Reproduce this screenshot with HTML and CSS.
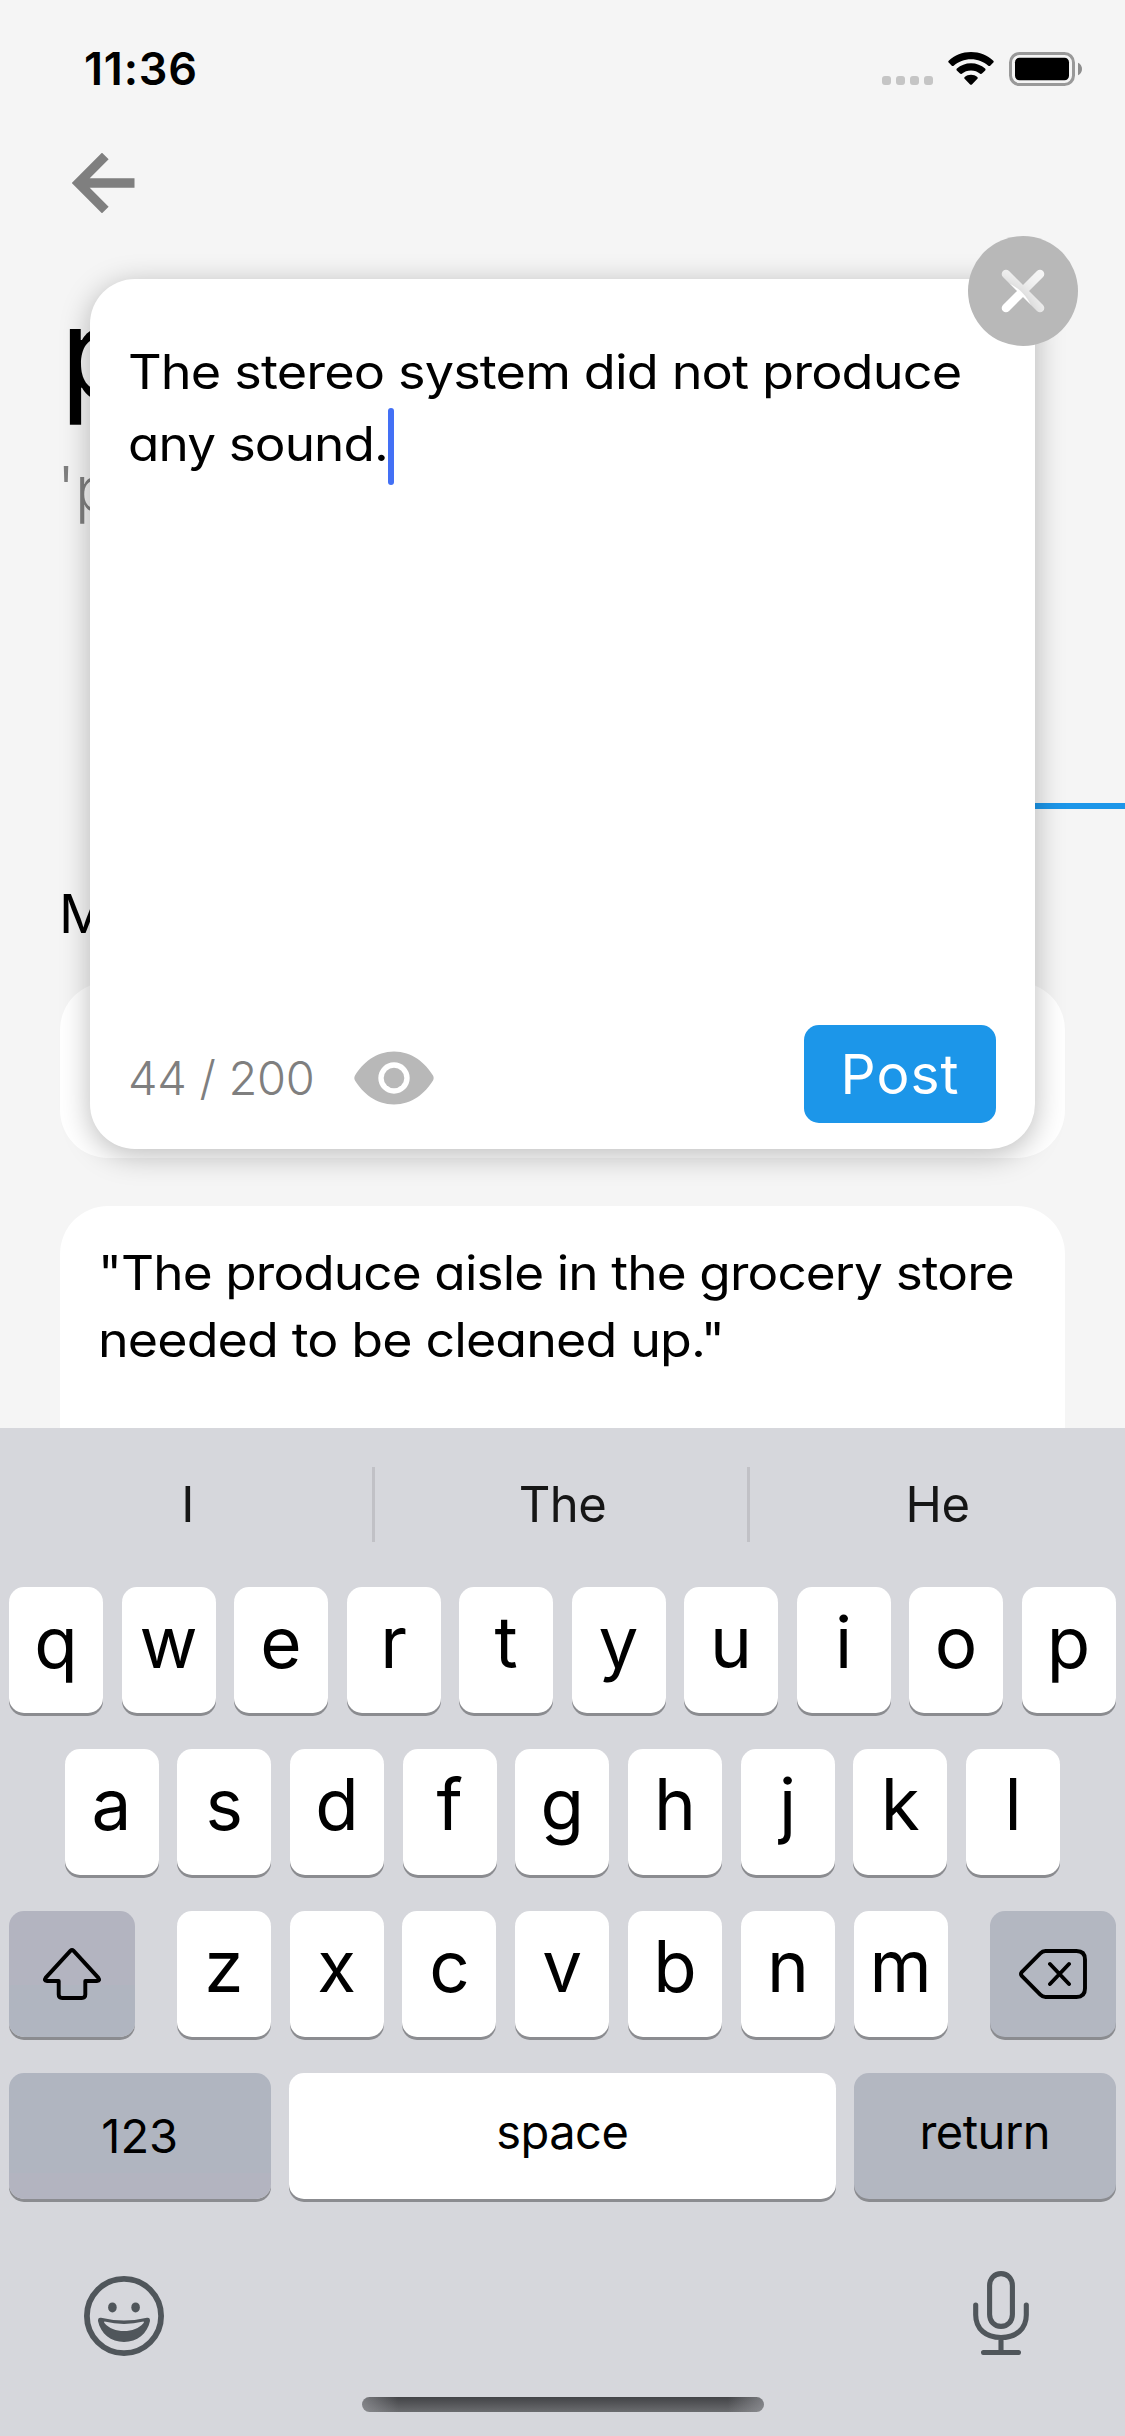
FILE: index.html
```html
<!DOCTYPE html>
<html lang="en">
<head>
<meta charset="utf-8">
<title>Add a sentence</title>
<link rel="stylesheet" href="styles.css">
</head>
<body>
<main class="screen">
  <header class="status">
    <span class="time">11:36</span>
    <div class="status-icons">
      <span class="dots"><i></i><i></i><i></i><i></i></span>
      <svg class="wifi" width="46" height="34" viewBox="0 0 46 34">
        <path d="M23 0C14.4 0 6.600 3.300.7 8.700c-.6.500-.6 1.400 0 1.900l3.100 3.100c.5.500 1.300.500 1.900 0C10.300 9.600 16.400 7.200 23 7.200s12.700 2.400 17.300 6.500c.6.500 1.400.500 1.900 0l3.100-3.100c.6-.5.6-1.400 0-1.900C39.400 3.300 31.600 0 23 0z"/>
        <path d="M23 11.200c-5.400 0-10.300 2-14.100 5.300-.6.500-.6 1.400-.1 1.900l3.200 3.200c.5.500 1.300.5 1.800.1 2.500-2.100 5.700-3.300 9.200-3.300s6.700 1.200 9.200 3.300c.5.400 1.300.4 1.800-.1l3.200-3.200c.5-.5.5-1.400-.1-1.900-3.800-3.300-8.700-5.300-14.100-5.300z"/>
        <path d="M23 22.800c-2.400 0-4.600.8-6.300 2.200-.6.500-.6 1.300-.1 1.800l5.500 5.600c.5.500 1.300.5 1.800 0l5.500-5.600c.5-.5.5-1.300-.1-1.800-1.700-1.400-3.900-2.200-6.300-2.200z"/>
      </svg>
      <svg class="battery" width="73" height="34" viewBox="0 0 73 34">
        <rect x="1.500" y="1.500" width="63" height="31" rx="9" fill="none" stroke="#999" stroke-width="3"/>
        <rect x="6" y="5.700" width="54" height="22.600" rx="4.500"/>
        <path d="M69 10.700v12.600c2.500-1 4-3.500 4-6.300s-1.500-5.300-4-6.300z" fill="#8e8e8e"/>
      </svg>
    </div>
  </header>
  <nav class="nav">
    <svg width="63" height="60" viewBox="0 0 63 60"><path d="M62.500 30H6M33.300 3L6.400 30l26.900 27" fill="none" stroke="#7f7f7f" stroke-width="9.400"/></svg>
  </nav>
  <h1 class="word">p</h1>
  <p class="phonetic">'p</p>
  <div class="tab-line"></div>
  <h2 class="section">M</h2>
  <div class="entries">
    <article class="entry entry-short"></article>
    <article class="entry"><p><span class="e1">"The produce aisle in the grocery store</span><br><span class="e2">needed to be cleaned up."</span></p></article>
  </div>

  <section class="composer">
    <p class="draft"><span class="d1">The stereo system did not produce</span><br><span class="d2">any sound.</span><span class="caret"></span></p>
    <footer class="composer-bar">
      <span class="count">44 / 200</span>
      <svg class="eye" width="80" height="54" viewBox="0 0 80 54">
        <path fill-rule="evenodd" fill="#b8b8b8" d="M40 .500C58 .500 71.500 12 79 24.500c.9 1.600.9 3.400 0 5C71.500 42 58 53.500 40 53.500S8.500 42 1 29.500c-.9-1.600-.9-3.400 0-5C8.500 12 22 .5 40 .5zM40 11.300a15.700 15.700 0 1 0 0 31.400a15.700 15.700 0 1 0 0-31.400z"/>
        <circle cx="40" cy="27" r="10.300" fill="#b8b8b8"/>
      </svg>
      <button class="post">Post</button>
    </footer>
    <svg class="close" width="110" height="110" viewBox="0 0 110 110">
      <mask id="cross"><rect width="110" height="110" fill="#fff"/><path d="M38 38l34 34M72 38L38 72" stroke="#000" stroke-width="8.600" stroke-linecap="round"/></mask>
      <circle cx="55" cy="55" r="55" fill="#b8b8b8" mask="url(#cross)"/>
    </svg>
  </section>
</main>

<section class="keyboard">
  <div class="suggestions"><span>I</span><span>The</span><span>He</span></div>
  <div class="row"><kbd>q</kbd><kbd>w</kbd><kbd>e</kbd><kbd>r</kbd><kbd>t</kbd><kbd>y</kbd><kbd>u</kbd><kbd>i</kbd><kbd>o</kbd><kbd>p</kbd></div>
  <div class="row row-mid"><kbd>a</kbd><kbd>s</kbd><kbd>d</kbd><kbd>f</kbd><kbd>g</kbd><kbd>h</kbd><kbd>j</kbd><kbd>k</kbd><kbd>l</kbd></div>
  <div class="row">
    <kbd class="side shift"><svg width="60" height="54" viewBox="0 0 60 54"><path d="M28.600 3.600Q30 2.200 31.400 3.600L56.200 30.600Q58.500 34 55 34H43.300V47.500Q43.300 51 39.800 51H20.200Q16.700 51 16.700 47.500V34H5Q1.500 34 3.800 30.600Z" fill="none" stroke="#000" stroke-width="3.900" stroke-linejoin="round"/></svg></kbd>
    <div class="letters"><kbd>z</kbd><kbd>x</kbd><kbd>c</kbd><kbd>v</kbd><kbd>b</kbd><kbd>n</kbd><kbd>m</kbd></div>
    <kbd class="side"><svg width="70" height="52" viewBox="0 0 70 52"><path d="M27.500 3H58.500Q67 3 67 11.500V40.500Q67 49 58.500 49H27.500Q24.500 49 22.300 46.700L4 28.200Q2 26 4 23.800L22.300 5.300Q24.500 3 27.500 3ZM32 16L51 36M51 16L32 36" fill="none" stroke="#000" stroke-width="3.900" stroke-linejoin="round" stroke-linecap="round"/></svg></kbd>
  </div>
  <div class="row"><kbd class="wide num">123</kbd><kbd class="space">space</kbd><kbd class="wide">return</kbd></div>
  <div class="tools">
    <svg class="emoji" width="80" height="80" viewBox="0 0 80 80">
      <circle cx="40" cy="40" r="37.100" fill="none" stroke="#50565b" stroke-width="5.800"/>
      <ellipse cx="28.400" cy="31.400" rx="4.300" ry="5" fill="#50565b"/><ellipse cx="51.600" cy="31.400" rx="4.300" ry="5" fill="#50565b"/>
      <path fill="#50565b" fill-rule="evenodd" d="M17 41.700Q40 47.300 63 41.700Q66.200 41.300 66 45C63.500 57.500 53 66 40 66S16.500 57.500 14 45Q13.800 41.300 17 41.700ZM20.500 45.500Q19.600 45.800 20.400 47C25 52.500 32 55 40 55S55 52.500 59.600 47Q60.400 45.800 59.500 45.500Q40 50.300 20.500 45.500Z"/>
    </svg>
    <svg width="56" height="84" viewBox="0 0 56 84"><path d="M28 2.600c6.600 0 11.400 5 11.400 12V43.400c0 7-4.800 12-11.400 12s-11.400-5-11.400-12V14.600c0-7 4.800-12 11.400-12zM2.700 34v10C2.700 58 13 66.500 28 66.500S53.300 58 53.300 44V34M28 66.500V81.500M10.500 81.500H45.500" fill="none" stroke="#50565b" stroke-width="5.100" stroke-linecap="round"/></svg>
  </div>
  <div class="home"></div>
</section>
</body>
</html>
```
FILE: styles.css
```css
* { box-sizing: border-box; }
body {
  margin: 0;
  width: 1125px;
  height: 2436px;
  overflow: hidden;
  background: #f5f5f5;
  color: #000;
  font-family: Inter, "Liberation Sans", sans-serif;
}
h1, h2, p { margin: 0; font-weight: 400; }
svg { display: block; flex: none; }

.screen { position: relative; height: 1428px; overflow: hidden; }
.status {
  display: flex;
  justify-content: space-between;
  height: 153px;
  padding: 52px 43px 0 84px;
}
.time { font-size: 45px; font-weight: 600; line-height: 34px; letter-spacing: .8px; }
.status-icons { display: flex; align-items: flex-start; }
.dots { display: flex; gap: 5px; padding-top: 24px; }
.dots i { width: 9px; height: 9px; border-radius: 3px; background: #c5c5c5; }
.wifi { margin-left: 15px; }
.battery { margin-left: 15px; }
.nav { height: 90px; padding-left: 72px; }
.word { height: 215px; padding: 30px 0 0 60px; font-size: 128px; line-height: 160px; }
.phonetic { height: 345px; padding-left: 57px; font-size: 62px; line-height: 62px; font-weight: 300; color: #7f7f7f; }
.tab-line { height: 6px; margin-left: 50%; background: #1c96e9; }
.section { height: 173px; padding: 70px 0 0 59px; font-size: 54px; line-height: 70px; }
.entries { display: flex; flex-direction: column; gap: 48px; padding: 0 60px; }
.entry { height: 300px; padding: 33px 38px; border-radius: 48px; background: #fff; font-size: 48px; line-height: 67px; }
.entry-short { height: 176px; }
.entry p, .draft, .post { font-feature-settings: "cv11"; white-space: nowrap; }

/* Wide, tightly tracked letterforms for the sentence text */
.e1, .e2, .d1, .d2 { display: inline-block; letter-spacing: -.8px; transform-origin: 0 50%; }
.e1 { transform: scaleX(1.068); }
.e2 { transform: scaleX(1.082); }
.d1 { transform: scaleX(1.088); }
.d2 { transform: scaleX(1.067); }

.composer {
  position: absolute;
  left: 90px;
  top: 279px;
  width: 945px;
  height: 870px;
  padding: 57px 38px 26px;
  display: flex;
  flex-direction: column;
  justify-content: space-between;
  border-radius: 45px;
  background: #fff;
  box-shadow: 0 6px 30px rgba(0, 0, 0, .27);
}
.draft { font-size: 48px; line-height: 72px; }
.caret { display: inline-block; width: 6px; height: 77px; margin: -23px 0 -20px 16px; vertical-align: middle; border-radius: 3px; background: #4370f5; }
.composer-bar { display: flex; align-items: center; height: 98px; padding-right: 1px; }
.count { width: 226px; padding-top: 7px; font-size: 47px; line-height: 98px; font-weight: 300; letter-spacing: -.3px; color: #7f7f7f; white-space: nowrap; }
.eye { margin-top: 7px; }
.post {
  width: 192px;
  height: 98px;
  margin-left: auto;
  padding: 0;
  border: 0;
  border-radius: 15px;
  background: #1c96e9;
  color: #fff;
  font-family: inherit;
  font-size: 55px;
  line-height: 96px;
  letter-spacing: 1px;
}
.close { position: absolute; left: 878px; top: -43px; }

.keyboard { height: 1008px; padding: 0 9.500px 0 9px; background: #d6d7dc; display: flex; flex-direction: column; }
.suggestions { display: flex; height: 159px; margin: 0 -9.500px 0 -9px; padding-top: 39px; flex: none; }
.suggestions span { width: 375px; height: 75px; text-align: center; font-size: 49px; line-height: 76px; letter-spacing: -.6px; color: #161616; }
.suggestions span + span { border-left: 3px solid #c1c1c6; margin-left: -3px; width: 378px; }
.row { display: flex; justify-content: space-between; height: 126px; margin-bottom: 36px; flex: none; }
.row-mid { padding: 0 55.500px; }
.letters { display: flex; width: 771px; justify-content: space-between; }
kbd {
  width: 94px;
  height: 126px;
  border-radius: 15px;
  background: #fff;
  box-shadow: 0 3px 0 #8b8c90;
  font: 400 71px/110px Inter, "Liberation Sans", sans-serif;
  text-align: center;
}
.side { width: 126px; display: flex; align-items: center; justify-content: center; background: #b3b7c1; }
.shift { background: linear-gradient(#b3b4c0 59%, #b0b5c0 59%); }
.wide, .space { width: 261.500px; background: #b3b7c1; font-size: 47px; font-weight: 400; line-height: 118px; letter-spacing: -.5px; }
.num { background: linear-gradient(#b0b5c0 79%, #b3b4c0 79%); line-height: 125px; letter-spacing: 0; }
.space { width: 547px; background: #fff; }
.tools { display: flex; justify-content: space-between; align-items: flex-start; padding: 36px 86.500px 0 75px; }
.emoji { margin-top: 5px; }
.home { width: 402px; height: 15px; margin: 41px auto 0 353px; border-radius: 8px; background: linear-gradient(90deg, rgba(160,161,166,.6), transparent 9%, transparent 91%, rgba(160,161,166,.6)), linear-gradient(#424346, #6b6c6f); }
```
